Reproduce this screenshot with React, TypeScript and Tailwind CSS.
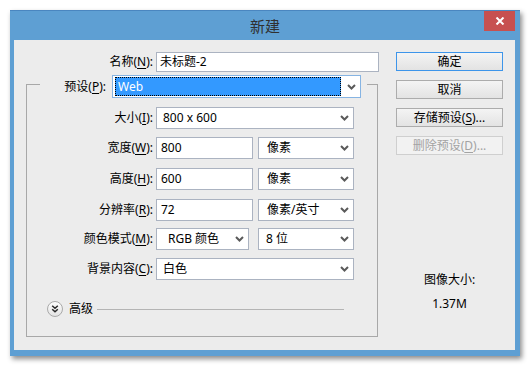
import React from "react";

const Chevron = () => (
  <svg width="9" height="6" viewBox="0 0 9 6" className="shrink-0">
    <path d="M1 1 L4.5 4.5 L8 1" fill="none" stroke="#5a5a5a" strokeWidth="2" />
  </svg>
);

const U = ({ c }: { c: string }) => (
  <span className="underline underline-offset-[2px] decoration-[1px]">{c}</span>
);

const Select = ({ text, w, pl, ml }: { text: string; w: string; pl: string; ml?: string }) => (
  <div className={`${w} ${ml ?? ""} h-[22px] border border-[#abb3c1] bg-white flex items-center`}>
    <span className={`flex-1 ${pl} whitespace-nowrap`}>{text}</span>
    <div className="mr-[4px] flex items-center">
      <Chevron />
    </div>
  </div>
);

const Input = ({ text, w, pl }: { text: string; w: string; pl: string }) => (
  <div className={`${w} h-[22px] border border-[#abb3c1] bg-white flex items-center ${pl}`}>{text}</div>
);

const Label = ({ children }: { children: React.ReactNode }) => (
  <div className="w-[126px] text-right whitespace-nowrap">{children}</div>
);

const Btn = ({ children, def, disabled }: { children: React.ReactNode; def?: boolean; disabled?: boolean }) => (
  <div
    className={`h-[19px] w-[107px] flex items-center justify-center border leading-none whitespace-nowrap ${
      def
        ? "border-[#3d95ea] bg-linear-to-b from-[#f4f4f4] to-[#e3e3e3] text-black"
        : disabled
        ? "border-[#cfcfcf] bg-[#f2f2f2] text-[#a3a3a3]"
        : "border-[#acacac] bg-linear-to-b from-[#f4f4f4] to-[#e3e3e3] text-black"
    }`}
  >
    {children}
  </div>
);

export default function App() {
  return (
    <div className="w-[531px] h-[367px] bg-white pt-[10px] pl-[10px] font-['Noto_Sans','Noto_Sans_CJK_SC',sans-serif] text-[12px] text-black overflow-hidden">
      <div className="w-[510px] h-[346px] bg-[#5e9fd3] border-t border-[#4a86c0] shadow-[2px_3px_5px_rgba(0,0,0,0.45)] flex flex-col">
        {/* Title bar */}
        <div className="relative h-[29px] flex items-center justify-center">
          <span className="text-[15px] text-[#303030] font-['Noto_Sans_CJK_SC',sans-serif] leading-none">新建</span>
          <div className="absolute top-0 right-[5px] w-[31px] h-[20px] bg-[#c75050] flex items-center justify-center">
            <svg width="10" height="8" viewBox="0 0 10 8">
              <path d="M1.5 0.5 L8.5 7.5 M8.5 0.5 L1.5 7.5" stroke="#fff" strokeWidth="2" />
            </svg>
          </div>
        </div>

        {/* Client */}
        <div className="ml-[4px] mr-[5px] h-[310px] bg-[#ececec] flex">
          {/* Left column */}
          <div className="w-[368px] flex flex-col">
            <div className="mt-[12px] h-[20px] flex items-center">
              <div className="w-[139px] text-right whitespace-nowrap">
                名称(<U c="N" />):
              </div>
              <div className="ml-[3px] w-[223px] h-[20px] border border-[#abb3c1] bg-white flex items-center pl-[3px]">
                未标题-2
              </div>
            </div>

            {/* Group box */}
            <div className="mt-[12px] ml-[12px] w-[352px] h-[253px] border border-[#a8a8a8] flex flex-col">
              <div className="-mt-[10px] ml-[13px] w-[327px] h-[23px] bg-[#ececec] flex items-center">
                <div className="w-[68px] text-right pr-[2px] whitespace-nowrap">
                  预设(<U c="P" />):
                </div>
                <div className="ml-[4px] w-[249px] h-[23px] border border-[#86b4e3] bg-white flex items-center p-[1px]">
                  <div className="ml-[1px] w-[226px] h-[19px] bg-[#3399ff] border border-dotted border-black text-white pl-[2px] flex items-center">
                    Web
                  </div>
                  <div className="ml-[6px] flex items-center">
                    <Chevron />
                  </div>
                </div>
              </div>

              <div className="mt-[9px] h-[22px] flex items-center">
                <Label>
                  大小(<U c="I" />):
                </Label>
                <div className="ml-[3px]">
                  <Select text="800 x 600" w="w-[198px]" pl="pl-[6px]" />
                </div>
              </div>

              <div className="mt-[8px] h-[22px] flex items-center">
                <Label>
                  宽度(<U c="W" />):
                </Label>
                <div className="ml-[3px] flex">
                  <Input text="800" w="w-[97px]" pl="pl-[4px]" />
                  <Select text="像素" w="w-[96px]" ml="ml-[5px]" pl="pl-[8px]" />
                </div>
              </div>

              <div className="mt-[9px] h-[22px] flex items-center">
                <Label>
                  高度(<U c="H" />):
                </Label>
                <div className="ml-[3px] flex">
                  <Input text="600" w="w-[97px]" pl="pl-[4px]" />
                  <Select text="像素" w="w-[96px]" ml="ml-[5px]" pl="pl-[8px]" />
                </div>
              </div>

              <div className="mt-[9px] h-[22px] flex items-center">
                <Label>
                  分辨率(<U c="R" />):
                </Label>
                <div className="ml-[3px] flex">
                  <Input text="72" w="w-[97px]" pl="pl-[4px]" />
                  <Select text="像素/英寸" w="w-[96px]" ml="ml-[5px]" pl="pl-[8px]" />
                </div>
              </div>

              <div className="mt-[7px] h-[22px] flex items-center">
                <Label>
                  颜色模式(<U c="M" />):
                </Label>
                <div className="ml-[3px] flex">
                  <Select text="RGB 颜色" w="w-[93px]" pl="pl-[11px]" />
                  <Select text="8 位" w="w-[96px]" ml="ml-[9px]" pl="pl-[7px]" />
                </div>
              </div>

              <div className="mt-[8px] h-[22px] flex items-center">
                <Label>
                  背景内容(<U c="C" />):
                </Label>
                <div className="ml-[3px]">
                  <Select text="白色" w="w-[198px]" pl="pl-[6px]" />
                </div>
              </div>

              <div className="mt-[21px] ml-[20px] h-[16px] flex items-center">
                <svg width="16" height="16" viewBox="0 0 16 16" className="shrink-0">
                  <defs>
                    <linearGradient id="adv" x1="0" y1="0" x2="0" y2="1">
                      <stop offset="0" stopColor="#ffffff" />
                      <stop offset="1" stopColor="#e2e2e2" />
                    </linearGradient>
                  </defs>
                  <circle cx="8" cy="8" r="7.5" fill="url(#adv)" stroke="#a9a9a9" />
                  <path d="M5.2 4.8 L8 7.3 L10.8 4.8 M5.2 8.3 L8 10.8 L10.8 8.3" fill="none" stroke="#2a2a2a" strokeWidth="1.5" />
                </svg>
                <span className="ml-[6px] whitespace-nowrap">高级</span>
                <div className="ml-[4px] w-[247px] h-px bg-[#b4b4b4]" />
              </div>
            </div>
          </div>

          {/* Right column */}
          <div className="ml-[14px] w-[107px] flex flex-col pt-[12px]">
            <div className="flex flex-col gap-[9px]">
              <Btn def>确定</Btn>
              <Btn>取消</Btn>
              <Btn>
                存储预设(<U c="S" />)...
              </Btn>
              <Btn disabled>
                删除预设(<U c="D" />)...
              </Btn>
            </div>
            <div className="mt-[117px] leading-[16px] text-center whitespace-nowrap">图像大小:</div>
            <div className="mt-[8px] leading-[16px] text-center">1.37M</div>
          </div>
        </div>
      </div>
    </div>
  );
}
